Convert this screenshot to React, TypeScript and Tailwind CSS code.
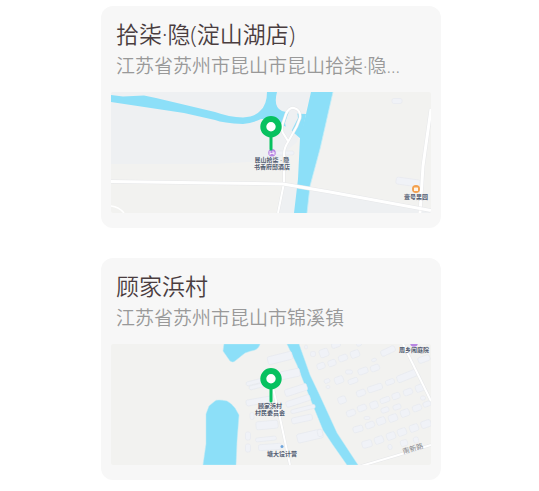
import type { ReactNode } from 'react'

interface PlaceCardProps {
  name: string
  address: string
  children: ReactNode
}

interface LabelProps {
  x: number
  y: number
  lines: string[]
}

// center x, center y, width, height, rotation
type Building = [number, number, number, number, number]

const lakeBuildings: Building[] = [
  [286, 9, 10, 5, 0],
  [297, 90, 24, 7, 8],
  [174, 61, 18, 4, 0],
]

const villageBuildings: Building[] = [
  [169, 14, 25, 8, -14],
  [179, 30, 20, 8, -12],
  [144, 38, 18, 4, -14],
  [147, 42, 18, 4, -14],
  [185, 46, 23, 7, -18],
  [148, 57, 26, 6, -10],
  [187, 57, 25, 6, -18],
  [192, 65, 25, 4, -14],
  [191, 75, 21, 6, -12],
  [199, 92, 26, 9, -13],
  [156, 81, 22, 8, -5],
  [155, 95, 21, 4, -6],
  [159, 103, 23, 6, -4],
  [137, 92, 5, 8, 0],
  [137, 104, 5, 8, 0],
  [141, 72, 4, 7, 0],
  [202, 10, 5, 5, 0],
  [213, 9, 9, 8, -20],
  [210, 22, 8, 6, -20],
  [216, 37, 6, 4, -20],
  [195, 3, 3, 4, 0],
  [225, 1, 9, 5, -20],
  [221, 19, 8, 6, -20],
  [232, 14, 9, 6, -20],
  [244, 10, 9, 7, -20],
  [248, 0, 5, 4, -20],
  [277, 7, 15, 6, -25],
  [263, 16, 5, 3, -20],
  [264, 24, 9, 6, -20],
  [252, 27, 10, 6, -20],
  [238, 28, 7, 4, 0],
  [228, 36, 9, 7, -20],
  [242, 37, 10, 5, -20],
  [217, 43, 4, 3, 0],
  [264, 44, 15, 6, -18],
  [250, 49, 9, 6, -20],
  [279, 38, 9, 5, -20],
  [296, 32, 21, 7, -22],
  [313, 15, 12, 6, -20],
  [231, 56, 8, 7, -20],
  [297, 48, 9, 6, -20],
  [309, 44, 9, 7, -20],
  [285, 52, 8, 6, -20],
  [274, 56, 10, 5, -20],
  [263, 61, 8, 7, -20],
  [251, 64, 9, 6, -20],
  [240, 69, 9, 6, -20],
  [286, 63, 8, 5, -20],
  [274, 66, 8, 5, -20],
  [312, 54, 5, 4, 0],
  [316, 60, 8, 5, -20],
  [306, 64, 9, 6, -20],
  [294, 69, 9, 7, -20],
  [282, 74, 9, 7, -20],
  [270, 77, 9, 7, -20],
  [259, 81, 9, 6, -20],
  [247, 85, 10, 6, -15],
  [256, 74, 6, 3, 0],
  [315, 80, 10, 7, -20],
  [303, 84, 9, 7, -20],
  [291, 88, 9, 7, -20],
  [280, 92, 9, 7, -20],
  [268, 96, 9, 7, -20],
  [256, 100, 10, 7, -15],
  [209, 89, 5, 7, -15],
  [279, 103, 4, 5, -15],
  [293, 99, 7, 6, -15],
  [305, 96, 5, 6, -15],
]

function Buildings({ items }: { items: Building[] }) {
  return (
    <g fill="#f0f2f7" stroke="#e5e8ee" strokeWidth="0.6">
      {items.map(([x, y, w, h, r]) => (
        <rect
          key={`${x}-${y}`}
          x={x - w / 2}
          y={y - h / 2}
          width={w}
          height={h}
          rx="1.8"
          transform={`rotate(${r} ${x} ${y})`}
        />
      ))}
    </g>
  )
}

function Road({ d, width }: { d: string; width: number }) {
  return (
    <g fill="none" strokeLinejoin="round">
      <path d={d} stroke="#e6e7e9" strokeWidth={width + 1} />
      <path d={d} stroke="#ffffff" strokeWidth={width} />
    </g>
  )
}

function Label({ x, y, lines }: LabelProps) {
  return (
    <text y={y} textAnchor="middle" fill="#535d72" className="text-[6px] font-semibold">
      {lines.map((line, i) => (
        <tspan key={line} x={x} dy={i === 0 ? 0 : 7}>
          {line}
        </tspan>
      ))}
    </text>
  )
}

function Pin() {
  return (
    <g>
      <path d="M160 44v13" stroke="#07c160" strokeWidth="3" strokeLinecap="round" />
      <circle cx="160" cy="34.7" r="7.7" fill="#ffffff" stroke="#07c160" strokeWidth="6" />
    </g>
  )
}

function LakeMap() {
  return (
    <svg viewBox="0 0 320 121" role="img" aria-label="拾柒·隐(淀山湖店)" className="block w-full rounded-xs">
      <rect width="320" height="121" fill="#f2f2f0" />
      <path d="M0 0H200L186 50 172 62 168 68 104 72H0Z" fill="#eef0f2" />
      <path d="M172 92 219 100 320 118V121H167Z" fill="#eef0f2" />
      <path
        d="M0 3 12 4.500 33 3.500 45 6 104 20Q118 25 132 25.500 144 25 149 19 156 13 156 0H166Q162 15 171 19 180 22 195 22L190 47 183 41Q178 35 173 34 166 26 150 27 142 31 132 32 112 31 104 28L73 21 0 10Z"
        fill="#8cdff8"
      />
      <path d="M200 0H222L209 57 199 94 196 121H183L187 87 189 46 195 22Z" fill="#8cdff8" />
      <path d="M222 0 209 57 199 94 196 121" fill="none" stroke="#c4edf7" strokeWidth="0.8" />
      <path d="M175 36 174 31 177 22Q179 18 183 18 187 20 187 26L180 40 177 45Z" fill="#eef0f2" />
      <Buildings items={lakeBuildings} />
      <Road d="M177 49 172 41Q170 37 172 31L175 22Q178 15 183 16 190 18 189 26 186 35 182 41L177 50Q173 56 173 62L173 91 167 121" width={2} />
      <Road d="M320 17 312 74 309 121" width={3} />
      <Road d="M0 89.500 104 91 172 92 219 100 320 118.500" width={3} />
      <path d="M0 114Q8 115 13 121" fill="none" stroke="#ffffff" strokeWidth="1.500" />
      <circle cx="161" cy="60.700" r="3.800" fill="#b987e3" />
      <path d="M159 59v4M159 61.500h4v1.500M161 60h2v1.500" fill="none" stroke="#ffffff" strokeWidth="0.8" />
      <circle cx="305" cy="97" r="4" fill="#f3a04f" />
      <rect x="303" y="95.500" width="4" height="3.500" rx="0.5" fill="#fff5e8" />
      <Label x={161} y={70} lines={['昆山拾柒 · 隐', '书香府邸酒店']} />
      <Label x={305} y={107} lines={['壹号果园']} />
      <Pin />
    </svg>
  )
}

function VillageMap() {
  return (
    <svg viewBox="0 0 320 121" role="img" aria-label="顾家浜村" className="block w-full rounded-xs">
      <rect width="320" height="121" fill="#f2f2f0" />
      <g fill="#8cdff8" stroke="#bdebf7" strokeWidth="0.5">
        <path d="M92 121 95 100V70L98 62 104 57Q106 55 116 57 120 59 124 64L128 71 126 97 125 121Z" />
        <path d="M113 0 112 7 119 17Q122 19 124 17L134 9Q139 7 144 6 148 4 149 0Z" />
        <path d="M176 0 186 21 199 54 212 86 222 101 236 121H247L226 89 209 52 199 31 188 0Z" />
      </g>
      <Buildings items={villageBuildings} />
      <Road d="M162 44 169 74 179 121" width={2} />
      <Road d="M292 0 320 57" width={2} />
      <Road d="M250 122 284 112 320 101" width={2} />
      <circle cx="303" cy="-1" r="3.800" fill="#b987e3" />
      <circle cx="171" cy="102.500" r="1.500" fill="#6fa6dd" />
      <Label x={159} y={64} lines={['顾家浜村', '村民委员会']} />
      <Label x={171} y={112} lines={['塘大设计营']} />
      <Label x={303} y={8} lines={['周乡闲庭院']} />
      <text x="302" y="107" textAnchor="middle" fill="#84868b" transform="rotate(-17 302 105)" className="text-[7px]">
        南新路
      </text>
      <Pin />
    </svg>
  )
}

function PlaceCard({ name, address, children }: PlaceCardProps) {
  return (
    <article className="w-full max-w-[340px] rounded-xl bg-[#f7f7f7] px-[10px] pt-[11px] pb-[15px]">
      <div className="px-[5px] pb-[11px]">
        <h2 className="text-[23px] leading-[35px] font-[350] text-[#4a3d3f]">{name}</h2>
        <p className="truncate text-[19px] leading-[29px] font-[350] text-[#999999]">{address}</p>
      </div>
      {children}
    </article>
  )
}

export default function App() {
  return (
    <main className="flex flex-col items-center gap-[30px] bg-white pt-[6px] pb-[11px] pl-[3px] font-['Open_Sans','Noto_Sans_CJK_SC',sans-serif]">
      <PlaceCard name="拾柒·隐(淀山湖店)" address="江苏省苏州市昆山市昆山拾柒·隐...">
        <LakeMap />
      </PlaceCard>
      <PlaceCard name="顾家浜村" address="江苏省苏州市昆山市锦溪镇">
        <VillageMap />
      </PlaceCard>
    </main>
  )
}
